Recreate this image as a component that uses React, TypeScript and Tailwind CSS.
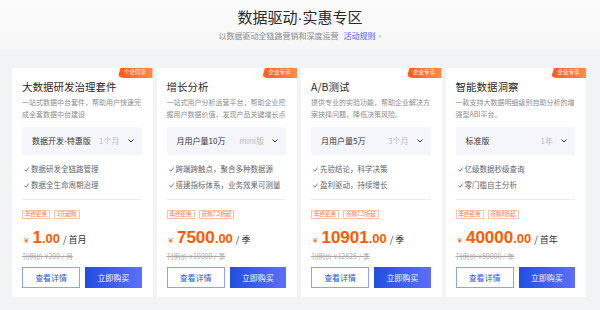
import React from 'react';

type Product = {
  title: string;
  desc: string;
  spec: string;
  period: string;
  features: string[];
  tags: string[];
  price: string;
  cents: string;
  unit: string;
  listPrice: string;
  badge: string;
};

const products: Product[] = [
  {
    title: '大数据研发治理套件',
    desc: '一站式数据中台套件，帮助用户快速完成全套数据中台建设',
    spec: '数据开发-特惠版',
    period: '1个月',
    features: ['数据研发全链路管理', '数据全生命周期治理'],
    tags: ['年终钜惠', '1元起购'],
    price: '1',
    cents: '.00',
    unit: '首月',
    listPrice: '刊例价 ¥200 / 月',
    badge: '个企同享',
  },
  {
    title: '增长分析',
    desc: '一站式用户分析运营平台，帮助企业挖掘用户数据价值，发现产品关键增长点',
    spec: '月用户量10万',
    period: 'mini版',
    features: ['跨端跨触点，聚合多种数据源', '搭建指标体系，业务效果可测量'],
    tags: ['年终钜惠', '首购7.5折起'],
    price: '7500',
    cents: '.00',
    unit: '季',
    listPrice: '刊例价 ¥10000 / 季',
    badge: '企业专享',
  },
  {
    title: 'A/B测试',
    desc: '提供专业的实验功能，帮助企业解决方案抉择问题，降低决策风险。',
    spec: '月用户量5万',
    period: '3个月',
    features: ['先验结论，科学决策', '盈利驱动，持续增长'],
    tags: ['年终钜惠', '首购7.5折起'],
    price: '10901',
    cents: '.00',
    unit: '季',
    listPrice: '刊例价 ¥12825 / 季',
    badge: '企业专享',
  },
  {
    title: '智能数据洞察',
    desc: '一款支持大数据明细级别自助分析的增强型ABI平台。',
    spec: '标准版',
    period: '1年',
    features: ['亿级数据秒级查询', '零门槛自主分析'],
    tags: ['年终钜惠', '首购8折起'],
    price: '40000',
    cents: '.00',
    unit: '首年',
    listPrice: '刊例价 ¥50000 / 年',
    badge: '企业专享',
  },
];

function Check() {
  return (
    <svg width="5" height="5" viewBox="0 0 10 10" className="shrink-0">
      <path d="M1 5.5 L4 8.5 L9 1.5" fill="none" stroke="#3b5bdb" strokeWidth="1.6" strokeLinecap="round" strokeLinejoin="round" />
    </svg>
  );
}

function Chevron() {
  return (
    <svg width="6" height="4" viewBox="0 0 12 8" className="shrink-0">
      <path d="M1.5 1.5 L6 6 L10.5 1.5" fill="none" stroke="#333" strokeWidth="2" strokeLinecap="round" strokeLinejoin="round" />
    </svg>
  );
}

function ProductCard({ p }: { p: Product }) {
  return (
    <div className="relative flex-1 bg-white pl-[10px] pr-[11px] pt-[12px] pb-[9px] flex flex-col">
      {/* corner badge */}
      <div className="absolute top-0 right-0 w-[35px] h-[10px] rounded-bl-[5px] bg-gradient-to-r from-[#ff5a1a] to-[#ff8a50] [clip-path:polygon(3px_0,100%_0,100%_100%,0_100%)] flex items-center justify-center">
        <span className="text-[5.5px] leading-none text-white">{p.badge}</span>
      </div>

      <div className="text-[10.5px] leading-[14px] text-[#2a2a2a]">{p.title}</div>
      <div className="mt-[2px] h-[24px] text-[7px] leading-[12px] text-[#8c8c8c] break-all">{p.desc}</div>

      {/* spec selector */}
      <div className="mt-[7px] h-[28px] bg-[#f5f6fb] flex items-center pl-[10px] pr-[8px]">
        <span className="flex-1 text-[8px] text-[#333]">{p.spec}</span>
        <span className="text-[8px] text-[#bbb] mr-[8px]">{p.period}</span>
        <Chevron />
      </div>

      <div className="mt-[8px] flex flex-col gap-[4px]">
        {p.features.map(f => (
          <div key={f} className="flex items-center gap-[2px] pl-[2px] h-[12px] text-[7.5px] text-[#666]">
            <Check />
            <span>{f}</span>
          </div>
        ))}
      </div>

      <div className="mt-[8px] border-t border-[#eeeeee]" />

      <div className="mt-[10px] flex gap-[4px]">
        {p.tags.map(t => (
          <span key={t} className="h-[9px] px-[2px] border-[0.5px] border-[#ffc4a8] text-[5.5px] leading-none text-[#ff6a3d] flex items-center">
            {t}
          </span>
        ))}
      </div>

      {/* price */}
      <div className="mt-[10px] flex items-baseline font-['Liberation_Sans','Noto_Sans_CJK_SC',sans-serif] text-[#ff5a00]">
        <span className="text-[8px] ml-[2px] mr-[4px]">¥</span>
        <span className="text-[17px] leading-[18px] font-bold">{p.price}</span>
        <span className="text-[13px] font-bold">{p.cents}</span>
        <span className="ml-[3px] text-[9px] text-[#333] font-['Noto_Sans_CJK_SC',sans-serif]">/ {p.unit}</span>
      </div>
      <div className="mt-[1px] text-[7px] leading-[12px] text-[#aaa] line-through">{p.listPrice}</div>

      <div className="mt-[auto] flex gap-[5px]">
        <button className="flex-1 h-[21px] border border-[#8aa2f0] text-[#2a55d6] text-[8px] bg-white">查看详情</button>
        <button className="flex-1 h-[21px] bg-gradient-to-r from-[#1e4fe0] to-[#5c6ff8] text-white text-[8px]">立即购买</button>
      </div>
    </div>
  );
}

export default function App() {
  return (
    <div className="w-[600px] h-[310px] bg-[#f2f3f5] flex flex-col font-['Noto_Sans_CJK_SC',sans-serif] overflow-hidden">
      {/* Header */}
      <div className="h-[50px] bg-gradient-to-b from-[#fbfbfb] to-[#f7f7f8] flex flex-col items-center">
        <div className="mt-[7px] text-[15px] leading-[20px] text-[#2a2a2a]">
          数据驱动<span className="font-['Liberation_Sans',sans-serif]">·</span>实惠专区
        </div>
        <div className="mt-[2px] flex items-center text-[8px] leading-[12px] text-[#888]">
          <span>以数据驱动全链路营销和深度运营</span>
          <span className="ml-[5px] text-[#3d5afe]">活动规则</span>
          <span className="ml-[3px] text-[6px] text-[#999]">»</span>
        </div>
      </div>

      {/* Cards */}
      <div className="mt-[18px] pl-[12px] pr-[14px] h-[229px] flex gap-[4px]">
        {products.map(p => (
          <ProductCard key={p.title} p={p} />
        ))}
      </div>
    </div>
  );
}
